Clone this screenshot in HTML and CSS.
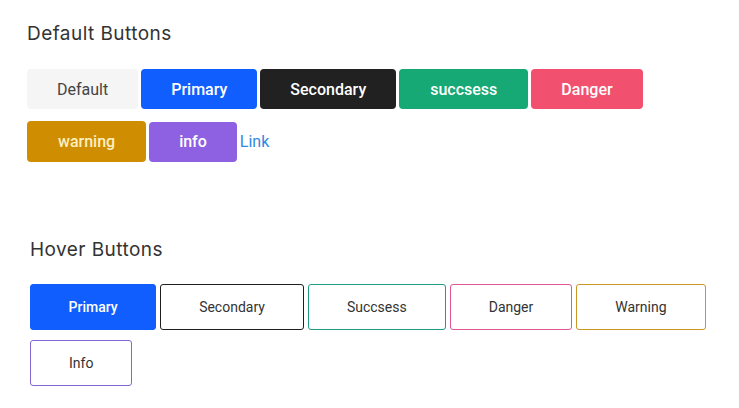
FILE: index.html
```html
<!DOCTYPE html>
<html>
<head>
<meta charset="utf-8">
<link rel="stylesheet" href="styles.css">
</head>
<body>
<section class="block block-default">
  <h2 class="title">Default Buttons</h2>
  <div class="btn-row">
    <button class="btn btn-default">Default</button>
    <button class="btn btn-primary">Primary</button>
    <button class="btn btn-secondary">Secondary</button>
    <button class="btn btn-success">succsess</button>
    <button class="btn btn-danger">Danger</button>
    <button class="btn btn-warning">warning</button>
    <button class="btn btn-info">info</button>
    <a class="link" href="#">Link</a>
  </div>
</section>
<section class="block block-hover">
  <h2 class="title">Hover Buttons</h2>
  <div class="hbtn-row">
    <button class="hbtn hbtn-primary">Primary</button>
    <button class="hbtn hbtn-secondary">Secondary</button>
    <button class="hbtn hbtn-success">Succsess</button>
    <button class="hbtn hbtn-danger">Danger</button>
    <button class="hbtn hbtn-warning">Warning</button>
    <button class="hbtn hbtn-info">Info</button>
  </div>
</section>
</body>
</html>
```
FILE: styles.css
```css
* { box-sizing: border-box; }
body {
  margin: 0;
  background: #fff;
  font-family: Roboto, "Liberation Sans", sans-serif;
}
.block-default { padding: 22px 0 0 27px; }
.block-hover { padding: 76px 0 0 30px; }
.title {
  margin: 0;
  font-family: Inter, "Open Sans", sans-serif;
  font-weight: 400;
  font-size: 19px;
  line-height: 24px;
  color: #333;
  letter-spacing: 0.45px;
}
.block-default .title { margin-bottom: 23px; }
.block-hover .title { margin-bottom: 22px; }

.btn-row {
  display: flex;
  flex-wrap: wrap;
  align-items: center;
  gap: 12px 3px;
  width: 620px;
}
.btn {
  height: 40px;
  padding: 0 30px;
  border: none;
  border-radius: 4px;
  font-family: Roboto, sans-serif;
  font-size: 16px;
  font-weight: 500;
  color: #fff;
  cursor: pointer;
}
.btn-default { background: #f5f5f5; color: #444; font-weight: 400; }
.btn-primary { background: #0f5efd; }
.btn-secondary { background: #212121; }
.btn-success { background: #16a875; padding: 0 31px; }
.btn-danger { background: #f1516f; }
.btn-warning { background: #cf8d02; color: #fcefc0; height: 41px; padding: 0 31px; }
.btn-info { background: #8d61e1; }
.link {
  font-size: 16px;
  color: #2f88e3;
  text-decoration: none;
}

.hbtn-row {
  display: flex;
  flex-wrap: wrap;
  gap: 10px 4px;
  width: 680px;
}
.hbtn {
  height: 46px;
  padding: 0 38px;
  border: 1px solid #ccc;
  border-radius: 3px;
  background: #fff;
  font-family: Roboto, sans-serif;
  font-size: 14px;
  color: #333;
  cursor: pointer;
}
.hbtn-primary { background: #0f5efd; border-color: #0f5efd; color: #fff; font-weight: 500; padding: 0 37.5px; }
.hbtn-secondary { border-color: #1f1f1f; }
.hbtn-success { border-color: #1e9c85; }
.hbtn-danger { border-color: #e0569a; }
.hbtn-warning { border-color: #c99525; }
.hbtn-info { border-color: #8467d4; }
```
